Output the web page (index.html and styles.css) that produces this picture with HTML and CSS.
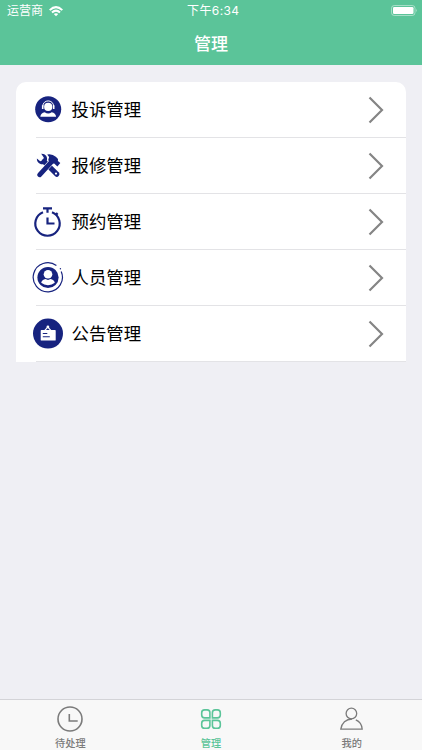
FILE: index.html
```html
<!DOCTYPE html>
<html lang="zh-CN">
<head>
<meta charset="utf-8">
<title>管理</title>
<link rel="stylesheet" href="styles.css">
</head>
<body>
<header class="header">
  <div class="status">
    <div class="carrier"><span>运营商</span>
      <svg class="wifi" viewBox="0 0 14 11"><g fill="none" stroke="#fff" stroke-width="2"><path d="M.7 4.1Q7-1.9 13.3 4.1"/><path d="M3 6.5Q7 2.8 11 6.5"/></g><path d="M4.8 8.1Q7 6.3 9.2 8.1L7 10.3z" fill="#fff"/></svg>
    </div>
    <time class="time">下午6:34</time>
    <svg class="battery" viewBox="0 0 27 12"><rect x=".5" y=".5" width="23.5" height="10" rx="2.8" fill="none" stroke="#fff" stroke-opacity=".45"/><rect x="2" y="2" width="20.5" height="7" rx="1.3" fill="#fff"/><path d="M25 3.7q1.6 1.8 0 3.6z" fill="#fff" fill-opacity=".5"/></svg>
  </div>
  <h1 class="title">管理</h1>
</header>
<main class="content">
  <ul class="card">
    <li class="row">
      <svg class="icon" viewBox="0 0 32 32"><circle cx="16.2" cy="15.2" r="13" fill="#17237f"/><circle cx="16.2" cy="12.9" r="4.1" fill="#fff"/><path d="M10.7 12.6C10.8 5 21.6 5 21.7 12.6" fill="none" stroke="#fff" stroke-width="1"/><path d="M10.7 11.3v3.6M21.7 11.3v3.6" stroke="#fff" stroke-width="1.6"/><path d="M8.3 22.7q.5-3.6 4.4-4.5 3.5 2.6 7 0 3.9.9 4.4 4.5z" fill="#fff"/></svg>
      <span class="label">投诉管理</span>
      <svg class="chevron" viewBox="0 0 16 28"><path d="M1.5 1.5 14 14 1.5 26.5"/></svg>
    </li>
    <li class="row">
      <svg class="icon" viewBox="0 0 32 32"><path d="M12 11.5 24.8 24.2" stroke="#17237f" stroke-width="5.2" stroke-linecap="round"/><path d="M9.2 3.7c4-.3 6.8 3 5.7 6.9l-3.8 3.7c-3.7.4-6.4-2.2-6.2-5.7l3.3 2.7 2.8-.9.8-3z" fill="#17237f"/><path d="M11.5 20.5 18 13.6" stroke="#fff" stroke-width="5.8"/><path d="M7.6 24.8 20.4 10.8" stroke="#17237f" stroke-width="4.8" stroke-linecap="round"/><path d="M15.2 4.4q5-1 8.6 2.4l2.2 2.3-.1 1.8 2.4 2.1-2.9 3.4-3.2-3-2.2.2-3.8-3.4.9-3.2z" fill="#17237f"/><circle cx="24" cy="23.6" r="1.1" fill="#fff"/></svg>
      <span class="label">报修管理</span>
      <svg class="chevron" viewBox="0 0 16 28"><path d="M1.5 1.5 14 14 1.5 26.5"/></svg>
    </li>
    <li class="row">
      <svg class="icon" viewBox="0 0 32 32"><g fill="none" stroke="#17237f" stroke-width="2.2"><path d="M11 6.2A12.2 12.2 0 1 0 20 6.2"/><path d="M11 2.4h9M15.5 2.4v4.4M15.5 11.5v6h7"/><path d="m24 7 1.6 1.7"/></g></svg>
      <span class="label">预约管理</span>
      <svg class="chevron" viewBox="0 0 16 28"><path d="M1.5 1.5 14 14 1.5 26.5"/></svg>
    </li>
    <li class="row">
      <svg class="icon" viewBox="0 0 32 32"><path d="M24.4 3.5A14.6 14.6 0 1 0 29.2 9.5" fill="none" stroke="#17237f" stroke-width="1.2"/><circle cx="28.4" cy="6.8" r=".7" fill="#17237f"/><circle cx="16" cy="15.5" r="10.6" fill="#17237f"/><circle cx="16" cy="12.3" r="4.3" fill="#fff"/><path d="M9.2 20.8q.8-3.1 4.3-3.7 2.5 1.6 5 0 3.5.6 4.3 3.7Q20 23.2 16 23.2t-6.8-2.4z" fill="#fff"/></svg>
      <span class="label">人员管理</span>
      <svg class="chevron" viewBox="0 0 16 28"><path d="M1.5 1.5 14 14 1.5 26.5"/></svg>
    </li>
    <li class="row">
      <svg class="icon" viewBox="0 0 32 32"><circle cx="16" cy="15.6" r="15" fill="#17237f"/><rect x="8.7" y="12" width="15" height="10.6" rx=".7" fill="#fff"/><path d="m12.8 12.4 3-3.2 3 3.2" fill="none" stroke="#fff" stroke-width="1.2"/><circle cx="15.9" cy="8.9" r="1.4" fill="#fff"/><path d="M10.8 15.5h4.5M10.8 18.7h7" stroke="#17237f" stroke-width="1.1"/></svg>
      <span class="label">公告管理</span>
      <svg class="chevron" viewBox="0 0 16 28"><path d="M1.5 1.5 14 14 1.5 26.5"/></svg>
    </li>
  </ul>
</main>
<nav class="tabs">
  <a class="tab"><svg viewBox="0 0 28 28"><circle cx="14" cy="14" r="12" /><path d="M13.3 9v7h8.4"/></svg><span>待处理</span></a>
  <a class="tab active"><svg viewBox="0 0 28 28"><path d="M8.5 4.9h1.7q2.7 0 2.7 2.7v5.3H7.6q-2.9 0-2.9-2.9V7.8q0-2.9 2.9-2.9zM18.2 4.9h2.2q2.9 0 2.9 2.9V10q0 2.9-2.9 2.9h-5V7.8q0-2.9 2.8-2.9zM7.6 15.4h5.3v5q0 2.9-2.9 2.9H7.6q-2.9 0-2.9-2.9v-2.1q0-2.9 2.9-2.9zM15.4 15.4h5q2.9 0 2.9 2.9v2.1q0 2.9-2.9 2.9h-2.2q-2.8 0-2.8-2.9z"/></svg><span>管理</span></a>
  <a class="tab"><svg class="user" viewBox="0 0 28 28"><circle cx="13.4" cy="8.5" r="5.3"/><path d="M14 14C8 14 3.6 18 2.8 24.2h21.4c-.3-4.3-2.6-7.7-6.4-9.3"/></svg><span>我的</span></a>
</nav>
</body>
</html>
```
FILE: styles.css
```css
* { box-sizing: border-box; }
body {
  margin: 0;
  height: 750px;
  display: flex;
  flex-direction: column;
  background: #efeff4;
  color: #000;
  font-family: Inter, "Noto Sans CJK SC", sans-serif;
  overflow: hidden;
}
svg { display: block; flex: none; }
.header {
  height: 65px;
  flex: none;
  background: #5bc499;
  color: #fff;
}
.status {
  height: 22px;
  display: grid;
  grid-template-columns: 1fr auto 1fr;
  align-items: center;
  padding: 0 4px 0 7px;
  font-size: 12px;
  line-height: 22px;
}
.carrier { display: flex; align-items: center; gap: 6px; }
.wifi { width: 14px; height: 11px; }
.time { font-size: 12px; letter-spacing: .4px; padding-left: 1.5px; }
.battery { width: 27px; height: 12px; justify-self: end; }
.title {
  margin: 0;
  height: 43px;
  line-height: 44px;
  text-align: center;
  font-size: 17px;
  font-weight: 500;
}
.content { flex: 1; padding: 17px 16px 0; }
.card {
  margin: 0;
  padding: 0;
  list-style: none;
  background: #fff;
  border-radius: 10px 10px 0 0;
}
.row {
  height: 56px;
  display: flex;
  align-items: center;
  padding: 0 22px 0 16px;
  background: linear-gradient(#e3e3e6, #e3e3e6) 20px 100% / calc(100% - 20px) 1px no-repeat;
}
.icon { width: 32px; height: 32px; }
.label { margin-left: 7.5px; flex: 1; font-size: 17.4px; line-height: 26px; }
.chevron { width: 16px; height: 28px; }
.chevron path { fill: none; stroke: #858585; stroke-width: 2.2; }
.tabs {
  height: 51px;
  flex: none;
  display: grid;
  grid-template-columns: repeat(3, 1fr);
  border-top: 1px solid #d3d3d7;
  background: #f8f8f8;
}
.tab {
  display: flex;
  flex-direction: column;
  align-items: center;
  padding-top: 5px;
  color: #7b7b7b;
  font-size: 10.2px;
  font-weight: 500;
  line-height: 15px;
}
.tab svg { width: 28px; height: 28px; margin-bottom: 3px; fill: none; stroke: currentColor; stroke-width: 1.6; }
.tab .user { stroke-width: 1.3; }
.tab.active { color: #5bc499; }
```
